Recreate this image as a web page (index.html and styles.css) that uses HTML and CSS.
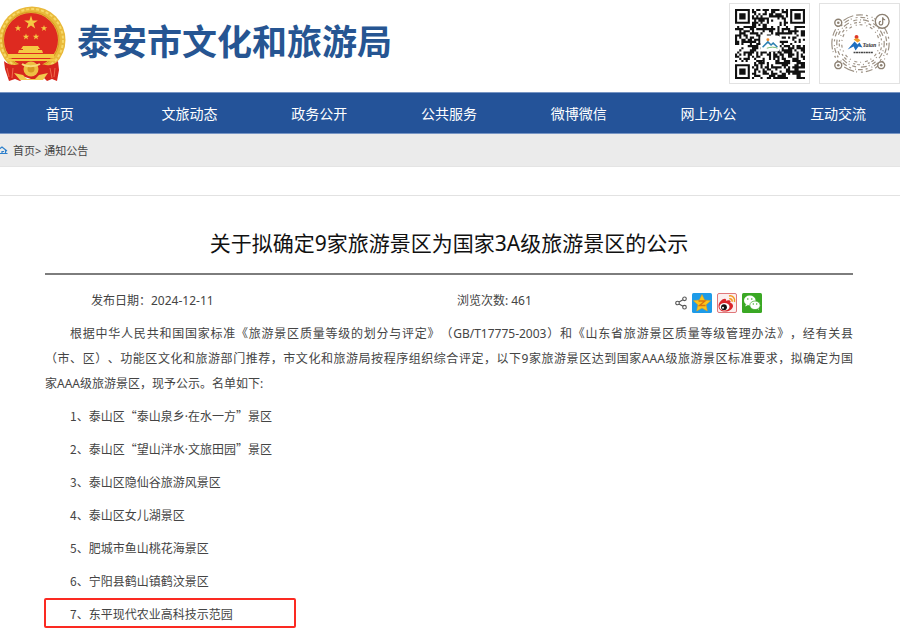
FILE: index.html
```html
<!DOCTYPE html>
<html lang="zh-CN">
<head>
  <meta charset="UTF-8">
  <meta name="viewport" content="width=device-width, initial-scale=1.0">
  <title>泰安市文化和旅游局</title>
  <link rel="stylesheet" href="styles.css">
</head>
<body>
  <header class="header">
    <svg class="emblem" viewBox="0 6 66 76" aria-hidden="true">
      <circle cx="32" cy="40" r="33.5" fill="#e9b93a"/>
      <circle cx="32" cy="40" r="31" fill="none" stroke="#f6d867" stroke-width="2" stroke-dasharray="3 2"/>
      <circle cx="31" cy="40" r="28" fill="none" stroke="#d79a22" stroke-width="1"/>
      <circle cx="31" cy="40" r="27" fill="#de2a20"/>
      <g fill="#f5c843">
        <path d="M31 15.500l1.600 5h5.200l-4.200 3.100 1.600 5-4.200-3.100-4.200 3.100 1.600-5-4.200-3.100h5.200z"/>
        <path d="M18 25l.8 2.200h2.400l-1.900 1.500.7 2.300-2-1.400-2 1.400.7-2.300-1.900-1.500h2.400z"/>
        <path d="M44 25l.8 2.200h2.400l-1.900 1.500.7 2.300-2-1.400-2 1.400.7-2.300-1.900-1.500h2.400z"/>
        <path d="M26 33.500l.8 2.200h2.400l-1.900 1.500.7 2.300-2-1.400-2 1.400.7-2.300-1.900-1.500h2.400z"/>
        <path d="M36 33.500l.8 2.200h2.400l-1.900 1.500.7 2.300-2-1.400-2 1.400.7-2.300-1.900-1.500h2.400z"/>
        <path d="M23 46h15l2 3h-2v1h4l1 3H18l1-3h4v-1h-2z"/>
        <path d="M8 54h46v4H8zM6 59h50l-2 2H8z"/>
      </g>
      <path d="M4 61c6 6 15 4 20 1l14 0c6 4 14 5 20-1l1 9-2 11-5-2-5 2-4-4-9 3-9-3-5 4-5-2-6 2-4-12z" fill="#d6261d"/>
      <path d="M7 68l2 9M13 68l-1 10M50 68l2 10M55 68l-1 9" stroke="#ef6a4c" stroke-width="1" fill="none"/>
      <circle cx="31" cy="69" r="7.500" fill="#eec043"/>
      <circle cx="31" cy="69" r="3.500" fill="#d79a22"/>
      <path d="M14 73l9 2 4 4h8l4-4 9-2-5 7H20z" fill="#f2ca4e"/>
      <path d="M22 64c4 3 13 3 18 0" stroke="#f8dc7a" stroke-width="2" fill="none"/>
    </svg>
    <h1 class="site-name">泰安市文化和旅游局</h1>
    <div class="codes">
      <div class="code-box">
        <svg class="qr" viewBox="0 0 33 33" role="img" aria-label="微信二维码">
          <path id="qr-modules" fill="#111"/>
          <rect x="12" y="12.500" width="9" height="7.500" rx="1" fill="#fff"/>
          <circle cx="15.500" cy="14.500" r=".7" fill="#ef8b2c"/>
          <path d="M13 18l2.500-2.500 1.500 1.500 1-1 2 2" stroke="#2b7fb0" stroke-width=".7" fill="none"/>
          <path d="M15 18.500q3-1 5 0" stroke="#5fae5a" stroke-width=".4" fill="none"/>
        </svg>
      </div>
      <div class="code-box">
        <svg class="round-code" viewBox="0 0 80 80" role="img" aria-label="抖音码">
          <g fill="none" stroke="#9c9184" stroke-width="1.200">
            <circle cx="41" cy="40" r="29" stroke-dasharray="7 3 2 4 1 2 11 3"/>
            <circle cx="41" cy="40" r="26.500" stroke-dasharray="2 3 5 2 1 4"/>
            <circle cx="41" cy="40" r="24" stroke-dasharray="4 3 1 2 6 5"/>
            <circle cx="41" cy="40" r="21.500" stroke-dasharray="1 3 3 2 2 4"/>
            <circle cx="41" cy="40" r="19" stroke-dasharray="3 4 1 3"/>
          </g>
          <g fill="#fff" stroke="#8c8072" stroke-width="1.400">
            <circle cx="18.500" cy="19" r="3.500"/>
            <circle cx="18.500" cy="62" r="3.500"/>
            <circle cx="62" cy="62" r="3.500"/>
            <circle cx="63" cy="17.500" r="7"/>
          </g>
          <g fill="#8c8072">
            <circle cx="18.500" cy="19" r="1.300"/>
            <circle cx="18.500" cy="62" r="1.300"/>
            <circle cx="62" cy="62" r="1.300"/>
          </g>
          <path d="M63.500 13.500v6a1.800 1.800 0 1 1-1.800-1.800M63.500 14q.5 2 2.500 2" fill="none" stroke="#8c8072" stroke-width="1.300"/>
          <circle cx="37" cy="33.500" r="2" fill="#dd3a2a"/>
          <path d="M34 36q4-3 7 1l-3 2z" fill="#f0a02c"/>
          <path d="M28 46l7-8 3 3 2-2 3 5-4-1-3 4-2-4z" fill="#1f6fc0"/>
          <text x="43" y="44" class="code-name">Taian</text>
          <path d="M34 49h20" stroke="#444" stroke-width="1.500" stroke-dasharray="2 .5"/>
        </svg>
      </div>
    </div>
  </header>

  <nav class="nav">
    <div class="nav-items">
      <a href="#">首页</a>
      <a href="#">文旅动态</a>
      <a href="#">政务公开</a>
      <a href="#">公共服务</a>
      <a href="#">微博微信</a>
      <a href="#">网上办公</a>
      <a href="#">互动交流</a>
    </div>
  </nav>

  <div class="crumbs">
    <svg class="home" viewBox="0 0 8 9" aria-hidden="true">
      <path d="M-3 5L2 1l5 4M5.500 4v4M0 7.500h7.500M2 8V5.500h2" fill="none" stroke="#2d80cc" stroke-width="1.200"/>
    </svg>
    <span><a href="#">首页</a>&gt; <a href="#">通知公告</a></span>
  </div>
  <div class="strip"></div>

  <main class="article">
    <h2 class="title">关于拟确定9家旅游景区为国家3A级旅游景区的公示</h2>

    <div class="meta">
      <span class="date">发布日期：2024-12-11</span>
      <span class="views">浏览次数: 461</span>
      <div class="share">
        <a href="#" class="share-more" aria-label="分享">
          <svg viewBox="0 0 12 14">
            <g fill="none" stroke="#555" stroke-width="1.100">
              <circle cx="2.500" cy="7" r="1.800"/>
              <circle cx="9.500" cy="2.800" r="1.800"/>
              <circle cx="9.500" cy="11.200" r="1.800"/>
              <path d="M4 6l4-2.300M4 8l4 2.300"/>
            </g>
          </svg>
        </a>
        <a href="#" aria-label="QQ空间">
          <svg viewBox="0 0 20 20">
            <rect width="20" height="20" rx="1.500" fill="#1e9be8"/>
            <path d="M10 1.500l2.600 5.500 6 .7-4.500 4.100 1.200 6.200L10 15l-5.300 3 1.200-6.200L1.400 7.700l6-.7z" fill="#fbc51b" stroke="#e8a010" stroke-width=".5"/>
            <path d="M6.500 8h6.500l-5.500 4.500h6" fill="none" stroke="#d9720f" stroke-width="1.400"/>
          </svg>
        </a>
        <a href="#" aria-label="新浪微博">
          <svg viewBox="0 0 20 20">
            <rect x=".5" y=".5" width="19" height="19" rx="1.500" fill="#fbeeee" stroke="#e0777a"/>
            <path d="M1.500 13c0-4 5-8 7-7 1 .6.500 2 .5 2s4-1.500 4.500 0c.3 1-.3 1.700-.3 1.700s3 .6 2.800 3.500c-.3 3-4 5.300-8 5.300s-6.500-2-6.500-5.500z" fill="#d9252a"/>
            <ellipse cx="7.500" cy="13.700" rx="5" ry="3.800" fill="#fff"/>
            <circle cx="7" cy="14.200" r="2.900" fill="#111"/>
            <circle cx="6" cy="14.800" r="1" fill="#fff"/>
            <path d="M12 3c3.500-.8 6.500 2.200 5.500 6M12.300 5.800c1.800-.4 3.200 1 2.700 2.900" fill="none" stroke="#f39a1f" stroke-width="1.500"/>
          </svg>
        </a>
        <a href="#" aria-label="微信">
          <svg viewBox="0 0 20 20">
            <rect width="20" height="20" rx="1.500" fill="#3aa824"/>
            <path d="M4 11l-.8 2.600L6 12z" fill="#fff"/>
            <ellipse cx="7.800" cy="7.500" rx="5.800" ry="5" fill="#fff"/>
            <path d="M15 15l1.800 2.200-.4-3.200z" fill="#fff"/>
            <ellipse cx="13" cy="12.300" rx="5.200" ry="4.300" fill="#fff" stroke="#3aa824" stroke-width=".7"/>
            <g fill="#3aa824">
              <circle cx="5.800" cy="6" r=".8"/>
              <circle cx="9.800" cy="6" r=".8"/>
              <circle cx="11.300" cy="11" r=".7"/>
              <circle cx="14.700" cy="11" r=".7"/>
            </g>
          </svg>
        </a>
      </div>
    </div>

    <p class="intro">
      <span class="line first">根据中华人民共和国国家标准《旅游景区质量等级的划分与评定》（GB/T17775-2003）和《山东省旅游景区质量等级管理办法》，经有关县</span>
      <span class="line">（市、区）、功能区文化和旅游部门推荐，市文化和旅游局按程序组织综合评定，以下9家旅游景区达到国家AAA级旅游景区标准要求，拟确定为国</span>
      <span class="line last">家AAA级旅游景区，现予公示。名单如下:</span>
    </p>

    <ul class="list">
      <li>1、泰山区“泰山泉乡<span class="dot">·</span>在水一方”景区</li>
      <li>2、泰山区“望山泮水<span class="dot">·</span>文旅田园”景区</li>
      <li>3、泰山区隐仙谷旅游风景区</li>
      <li>4、泰山区女儿湖景区</li>
      <li>5、肥城市鱼山桃花海景区</li>
      <li>6、宁阳县鹤山镇鹤汶景区</li>
      <li class="marked">7、东平现代农业高科技示范园</li>
    </ul>
  </main>

  <script src="qr.js"></script>
</body>
</html>
```

FILE: styles.css
```css
*,
*::after {
  box-sizing: border-box;
}
body {
  margin: 0;
  min-height: 100vh;
  background: #fff;
  color: #444;
  font-family: "Noto Sans", "Noto Sans CJK SC", sans-serif;
  font-size: 12px;
  line-height: 25px;
  text-spacing-trim: space-all;
}
a {
  color: inherit;
  text-decoration: none;
}
svg {
  display: block;
}

/* 顶部 */
.header {
  display: flex;
  align-items: flex-start;
  height: 92px;
}
.emblem {
  width: 66px;
  height: 76px;
  margin-top: 6px;
}
.site-name {
  margin: 14px 0 0 11px;
  font-family: "Noto Sans CJK SC", sans-serif;
  font-size: 35px;
  font-weight: 700;
  line-height: 52px;
  color: #265592;
}
.codes {
  display: flex;
  gap: 9px;
  margin: 3px 0 0 auto;
}
.code-box {
  display: flex;
  align-items: center;
  justify-content: center;
  width: 81px;
  height: 81px;
  border: 1px solid #e2e2e2;
}
.qr {
  width: 70px;
  height: 70px;
}
.round-code {
  width: 79px;
  height: 79px;
}
.code-name {
  font-family: "Liberation Serif", serif;
  font-size: 6px;
  font-style: italic;
  font-weight: bold;
  fill: #333;
}

/* 导航 */
.nav {
  overflow: hidden;
  background: #245399;
  border-top: 1px solid #7795c4;
  border-bottom: 1px solid #7795c4;
}
.nav-items {
  display: grid;
  grid-template-columns: repeat(7, 1fr);
  margin: 0 -3px 0 -5px;
}
.nav a {
  padding-top: 2px;
  font-size: 14px;
  line-height: 38px;
  text-align: center;
  color: #fff;
}
.crumbs {
  display: flex;
  align-items: center;
  gap: 5px;
  height: 33px;
  background: #ebebeb;
  border-bottom: 1px solid #e4e4e4;
  font-size: 11px;
}
.home {
  width: 8px;
  height: 9px;
}
.strip {
  height: 29px;
  border-bottom: 1px solid #e2e2e2;
}

/* 正文 */
.article {
  padding: 29px 47px 6px 45px;
}
.title {
  margin: 0;
  padding-bottom: 12px;
  border-bottom: 2px solid #7d7d7d;
  font-size: 21px;
  font-weight: normal;
  line-height: 36px;
  text-align: center;
  color: #111;
}
.meta {
  display: grid;
  grid-template-columns: 45% 27% 1fr;
  align-items: center;
  height: 46px;
  padding-left: 46px;
}
.date,
.views {
  padding-top: 4px;
}
.views {
  padding-left: 23px;
}
.share {
  display: flex;
  align-items: center;
  gap: 5px;
  padding-top: 9px;
  padding-left: 35px;
}
.share svg {
  width: 20px;
  height: 20px;
}
.share .share-more svg {
  width: 12px;
  height: 14px;
}
.intro {
  margin: 0;
}
.line {
  display: block;
  text-align: justify;
  text-align-last: justify;
}
.first {
  padding-left: 25px;
}
.last {
  text-align-last: left;
}
.list {
  margin: 7px 0 0;
  padding: 0;
  list-style: none;
  font-family: "Noto Sans CJK SC", sans-serif;
}
.list li {
  height: 25px;
  margin-bottom: 8px;
  padding-left: 25px;
}
.dot {
  font-family: "Noto Sans", sans-serif;
}
.list .marked {
  position: relative;
  margin-bottom: 0;
}
.marked::after {
  content: "";
  position: absolute;
  top: -3px;
  left: -1px;
  width: 252px;
  height: 30px;
  border: 2px solid #fb2a22;
  border-radius: 2px;
}
```

FILE: qr.js
```js
const size = 33;

// 三个定位角
function finder(x, y) {
  const corners = [[0, 0], [size - 7, 0], [0, size - 7]];
  for (const [cx, cy] of corners) {
    const dx = Math.abs(x - cx - 3);
    const dy = Math.abs(y - cy - 3);
    const d = Math.max(dx, dy);
    if (d <= 4) return d === 3 || d <= 1 ? 1 : 0;
  }
  return -1;
}

let seed = 20241;
let path = '';
for (let y = 0; y < size; y++) {
  for (let x = 0; x < size; x++) {
    seed = (seed * 1103515 + 12345) % 2147483;
    const mark = finder(x, y);
    const on = mark >= 0 ? mark === 1 : seed % 1000 < 520;
    if (on) path += `M${x} ${y}h1v1h-1z`;
  }
}
document.getElementById('qr-modules').setAttribute('d', path);
```
